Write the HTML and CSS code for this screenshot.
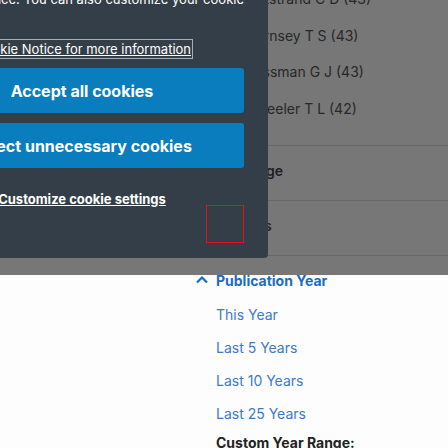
FILE: index.html
```html
<!DOCTYPE html>
<html lang="en">
<head>
<meta charset="utf-8">
<title>Search filters</title>
<link rel="stylesheet" href="styles.css">
</head>
<body>
<div class="page">
  <aside class="sidebar">
    <ul class="author-list">
      <li><span class="check"></span>Eckstrand C D (43)</li>
      <li><span class="check"></span>Hornsey T S (43)</li>
      <li><span class="check"></span>Bossman G J (43)</li>
      <li><span class="check"></span>Wheeler T L (42)</li>
    </ul>
    <section class="facet">
      <h3 class="facet-head"><svg class="chev" width="12" height="8" viewBox="0 0 12 8"><polyline points="1,1.5 6,6.5 11,1.5"/></svg>Language</h3>
    </section>
    <section class="facet">
      <h3 class="facet-head"><svg class="chev" width="12" height="8" viewBox="0 0 12 8"><polyline points="1,1.5 6,6.5 11,1.5"/></svg>Sources</h3>
    </section>
    <section class="facet open">
      <h3 class="facet-head"><svg class="chev" width="12" height="8" viewBox="0 0 12 8"><polyline points="1,6.5 6,1.5 11,6.5"/></svg>Publication Year</h3>
      <ul class="year-list">
        <li>This Year</li>
        <li>Last 5 Years</li>
        <li>Last 10 Years</li>
        <li>Last 25 Years</li>
      </ul>
      <p class="custom-label">Custom Year Range:</p>
    </section>
  </aside>

  <div class="backdrop"></div>

  <div class="cookie-panel">
    <p class="intro">We use cookies to analyze site traffic and to remember your<br>preference. You can also customize your cookie</p>
    <p class="notice">See our <a href="#" class="notice-link">Cookie Notice for more information</a></p>
    <div class="actions">
      <button class="btn">Accept all cookies</button>
      <button class="btn">Reject unnecessary cookies</button>
    </div>
    <a href="#" class="customize">Customize cookie settings</a>
    <div class="panel-foot"><span class="focus-box"></span></div>
  </div>
</div>
</body>
</html>
```

FILE: styles.css
```css
* { box-sizing: border-box; }

body {
  margin: 0;
  font-family: Inter, "Noto Sans", sans-serif;
  background: #fdfdfd;
  overflow: hidden;
}

.page {
  position: relative;
  height: 448px;
  overflow: hidden;
}

/* sidebar filters */
.sidebar {
  margin: -19.5px 0 0 196px;
  font-size: 14px;
}

.author-list {
  list-style: none;
  margin: 0;
  padding: 0 0 18.5px 20px;
}

.author-list li {
  height: 36.5px;
  display: flex;
  align-items: center;
  gap: 13px;
  color: #555;
}

.check {
  width: 16px;
  height: 16px;
  border: 1px solid #999;
  border-radius: 2px;
}

.facet {
  border-top: 1px solid #ddd;
}

.facet-head {
  display: flex;
  align-items: flex-start;
  gap: 8px;
  margin: 0;
  padding: 15px 0 19px;
  line-height: 20px;
  font-size: 14px;
  font-weight: 600;
  color: #444;
}

.chev {
  margin-top: 5px;
  fill: none;
  stroke: currentColor;
  stroke-width: 2.2;
}

.open .facet-head {
  padding-bottom: 0;
  font-weight: 700;
  color: #1b6cc3;
}

.year-list {
  list-style: none;
  margin: 14px 0 0;
  padding: 0 0 0 20px;
  display: flex;
  flex-direction: column;
  gap: 13px;
  line-height: 20px;
  color: #3b7acb;
}

.custom-label {
  margin: 9px 0 0 20px;
  line-height: 20px;
  font-weight: 700;
  color: #222;
}

/* modal backdrop */
.backdrop {
  position: absolute;
  top: 0;
  left: 0;
  width: 100%;
  height: 275px;
  background: rgba(0, 0, 0, 0.53);
}

/* cookie panel, anchored by its bottom edge (its top is scrolled out of view) */
.cookie-panel {
  position: absolute;
  bottom: 190px;
  left: -104px;
  width: 372px;
  padding: 20px 24px 15px;
  background: #343e48;
  border-radius: 0 0 4px 4px;
  color: #fff;
  font-size: 13px;
  line-height: 20px;
  display: flex;
  flex-direction: column;
}

.intro {
  margin: 0;
  text-align: right;
}

.notice {
  margin: 30px 0 0;
  padding-left: 4px;
  white-space: nowrap;
}

.notice-link {
  color: #fff;
  text-decoration: underline;
  outline: 1px solid #a9aeb3;
  outline-offset: 1px;
}

.actions {
  margin-top: 9px;
  display: flex;
  flex-direction: column;
  gap: 10px;
}

.btn {
  height: 45px;
  border: 0;
  border-radius: 3px;
  background: #0a7dbe;
  color: #fff;
  font-family: inherit;
  font-size: 16px;
  font-weight: 700;
}

.customize {
  margin-top: 21px;
  align-self: center;
  color: #fff;
  font-weight: 700;
  text-decoration: underline;
}

.panel-foot {
  display: flex;
  justify-content: flex-end;
  margin-top: -4px;
}

.focus-box {
  width: 38px;
  height: 38px;
  border: 1px solid #e3131b;
}
```
